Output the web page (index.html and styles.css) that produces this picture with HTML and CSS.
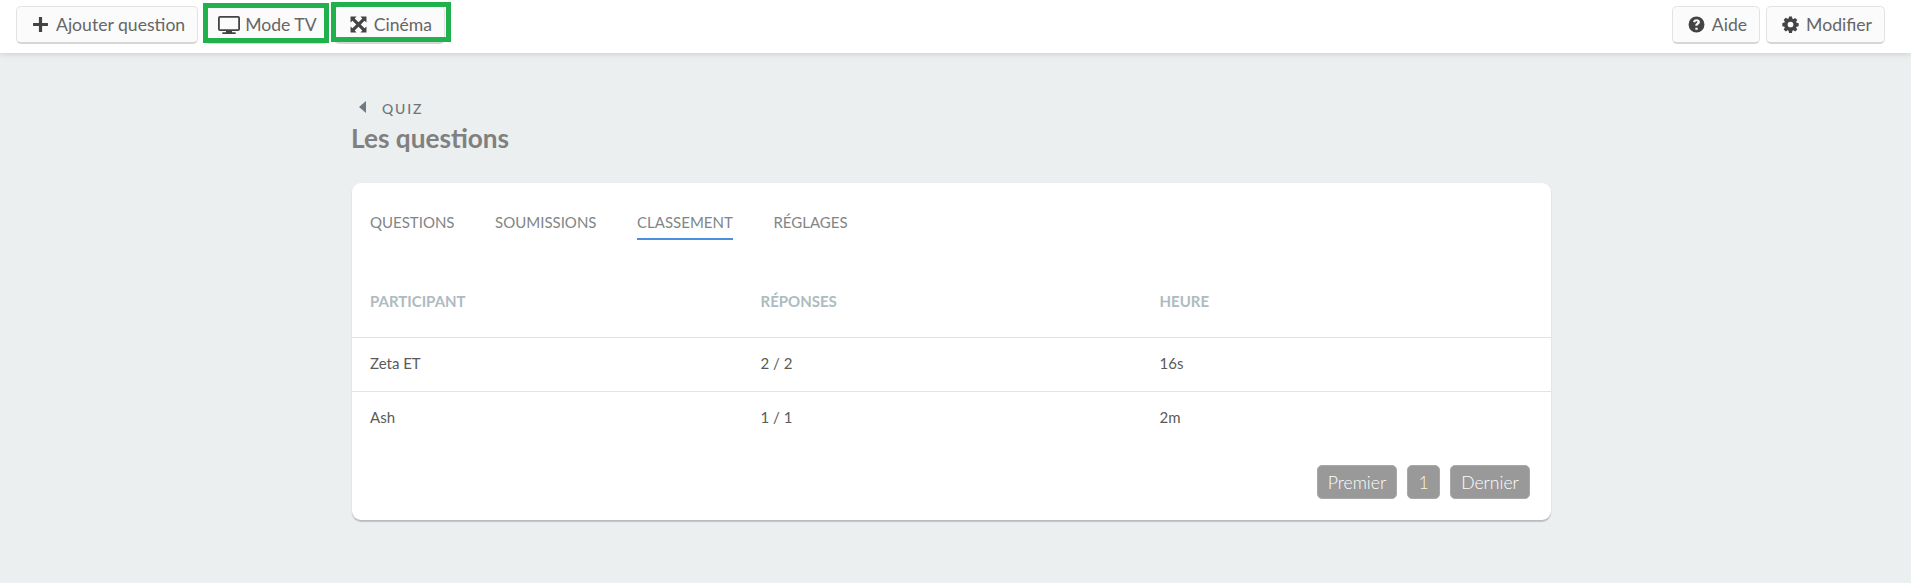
FILE: index.html
```html
<!DOCTYPE html>
<html lang="fr">
<head>
<meta charset="utf-8">
<title>Les questions</title>
<link rel="stylesheet" href="styles.css">
</head>
<body>
<header class="toolbar">
  <div class="group">
    <button class="btn"><svg class="ico" viewBox="0 0 16 16"><path d="M6.500 1h3v5.500H15v3H9.500V15h-3V9.500H1v-3h5.500z"/></svg>Ajouter question</button>
    <button class="btn btn-tv mark mark-tv"><svg class="ico ico-tv" viewBox="0 0 22 18"><path fill-rule="evenodd" d="M2 0h18a2 2 0 0 1 2 2v11a2 2 0 0 1-2 2h-6v1.200h3a.9.9 0 0 1 0 1.800H5a.9.9 0 0 1 0-1.800h3V15H2a2 2 0 0 1-2-2V2a2 2 0 0 1 2-2zm0 1.800a.2.2 0 0 0-.2.2v11c0 .1.1.2.2.2h18a.2.2 0 0 0 .2-.2V2a.2.2 0 0 0-.2-.2z"/></svg>Mode TV</button>
    <button class="btn mark mark-cinema"><svg class="ico" viewBox="0 0 16 16"><path d="M.500.500h5.700L4.400 2.300 8 5.900l3.600-3.600L9.800.500h5.700v5.700l-1.800-1.800L10.100 8l3.600 3.600 1.800-1.800v5.700H9.800l1.800-1.800L8 10.100l-3.600 3.600 1.800 1.800H.500V9.800l1.800 1.800L5.900 8 2.300 4.400.500 6.200z"/></svg>Cinéma</button>
  </div>
  <div class="group">
    <button class="btn"><svg class="ico" viewBox="0 0 16 16"><path fill-rule="evenodd" d="M8 .5a7.500 7.500 0 1 1 0 15 7.500 7.500 0 0 1 0-15zM6.900 11v2h2.200v-2zM8 3C6.200 3 5 4 4.800 5.600l2 .4c.1-.7.5-1.100 1.100-1.100.6 0 1 .3 1 .8 0 .4-.3.7-.9 1.100-.8.5-1.100 1-1.100 1.900v.5h2.100v-.3c0-.4.2-.6.8-1 .9-.6 1.400-1.300 1.400-2.300C11.200 4 9.900 3 8 3z"/></svg>Aide</button>
    <button class="btn"><svg class="ico" viewBox="0 0 16 16"><path fill-rule="evenodd" d="M6.600.5h2.800l.4 2 .9.4 1.700-1.100 2 2-1.100 1.700.4.900 2 .4v2.800l-2 .4-.4.900 1.100 1.700-2 2-1.700-1.100-.9.400-.4 2H6.600l-.4-2-.9-.4-1.700 1.100-2-2 1.100-1.700-.4-.9-2-.4V6.600l2-.4.4-.9-1.100-1.700 2-2 1.700 1.100.9-.4zM8 5.300a2.700 2.700 0 1 0 0 5.400 2.700 2.700 0 0 0 0-5.400z"/></svg>Modifier</button>
  </div>
</header>

<main class="content">
  <a class="back"><span class="caret"></span>QUIZ</a>
  <h1 class="title">Les questions</h1>

  <section class="card">
    <nav class="tabs">
      <a class="tab">QUESTIONS</a>
      <a class="tab">SOUMISSIONS</a>
      <a class="tab active">CLASSEMENT</a>
      <a class="tab">RÉGLAGES</a>
    </nav>
    <div class="row head">
      <div>PARTICIPANT</div><div>RÉPONSES</div><div>HEURE</div>
    </div>
    <div class="row item">
      <div>Zeta ET</div><div>2 / 2</div><div>16s</div>
    </div>
    <div class="row item">
      <div>Ash</div><div>1 / 1</div><div>2m</div>
    </div>
    <div class="pager">
      <button class="page">Premier</button>
      <button class="page current">1</button>
      <button class="page">Dernier</button>
    </div>
  </section>
</main>
</body>
</html>
```
FILE: styles.css
```css
* { box-sizing: border-box; }
html, body { margin: 0; height: 100%; }
body {
  background: #ebeff0;
  font-family: Lato, "Liberation Sans", sans-serif;
  color: #555;
  overflow: hidden;
}
.toolbar {
  height: 53px;
  background: #fff;
  padding: 6px 26px 0 16px;
  display: flex;
  justify-content: space-between;
  box-shadow: 0 1px 6px rgba(0, 0, 0, .14);
}
.group { display: flex; gap: 6px; align-items: flex-start; }
.btn {
  position: relative;
  height: 38px;
  padding: 0 12px 0 15px;
  display: flex;
  align-items: center;
  gap: 7px;
  background: #fbfbfb;
  border: 1px solid #e3e3e3;
  border-bottom: 2px solid #d6d6d6;
  border-radius: 5px;
  font: 400 17.6px Lato, "Liberation Sans", sans-serif;
  color: #666;
}
.btn-tv { padding-left: 13px; padding-right: 10px; gap: 5px; }
.ico { width: 17px; height: 17px; fill: #444; flex: none; }
.ico-tv { width: 22px; height: 18px; }
.mark::after {
  content: "";
  position: absolute;
  border: 5px solid #21b14c;
  pointer-events: none;
}
.mark-tv::after { left: -2px; right: -2px; top: -4px; bottom: -1px; }
.mark-cinema::after { left: -4px; right: -7px; top: -5px; bottom: 0; }
.content { width: 1199px; margin-left: 352px; }
.back {
  display: flex;
  align-items: center;
  margin: 47px 0 0 7px;
  height: 16px;
  font-size: 14px;
  font-weight: 500;
  letter-spacing: 1.8px;
  color: #6f7678;
}
.caret {
  width: 0;
  height: 0;
  margin-right: 16px;
  margin-top: -3px;
  border: 6px solid transparent;
  border-left: 0;
  border-right: 7px solid #6f7b80;
}
.title {
  margin: 6px 0 0 -1px;
  font-size: 26.2px;
  line-height: 32px;
  font-weight: 700;
  color: #808080;
}
.card {
  margin-top: 29px;
  height: 337px;
  background: #fff;
  border-radius: 9px;
  box-shadow: 0 1px 2px rgba(0, 0, 0, .08), 0 2px 1px rgba(0, 0, 0, .16);
  padding-top: 29px;
}
.tabs { display: flex; gap: 40.6px; padding-left: 18px; }
.tab {
  height: 28px;
  font-size: 15px;
  line-height: 20px;
  color: #7f8687;
}
.tab.active { border-bottom: 2px solid #4a8fe0; }
.row {
  display: grid;
  grid-template-columns: 390.500px 399px 1fr;
  padding-left: 18px;
}
.head {
  margin-top: 51px;
  height: 46px;
  font-size: 15px;
  font-weight: 700;
  line-height: 20px;
  color: #aebbc0;
}
.item {
  height: 54px;
  border-top: 1px solid #e3e3e3;
  font-size: 15px;
  line-height: 51px;
  color: #5a5a5a;
}
.pager {
  display: flex;
  justify-content: flex-end;
  padding-right: 21px;
  margin-top: 20px;
}
.page {
  height: 34px;
  width: 80px;
  padding: 0;
  margin-left: 10px;
  background: #999;
  border: 1px solid #a8a8a8;
  border-radius: 5px;
  font: 300 17.6px Lato, "Liberation Sans", sans-serif;
  color: #fff;
}
.page.current { color: #fdf3c8; width: 33px; }
```
